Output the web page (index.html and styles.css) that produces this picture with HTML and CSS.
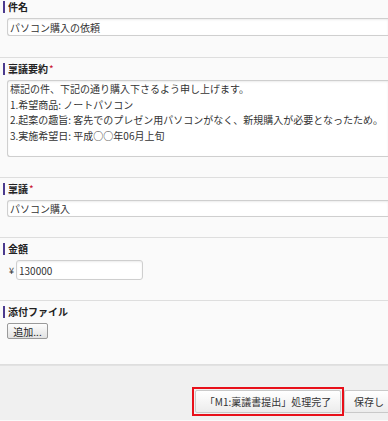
FILE: index.html
```html
<!DOCTYPE html>
<html lang="ja">
<head>
  <meta charset="UTF-8">
  <title>稟議書</title>
  <link rel="stylesheet" href="styles.css">
</head>
<body>
<div class="form">
  <div class="field first">
    <div class="label">件名</div>
    <input class="text wide" type="text" value="パソコン購入の依頼">
  </div>
  <div class="field">
    <div class="label">稟議要約<span class="req">*</span></div>
    <textarea class="memo">標記の件、下記の通り購入下さるよう申し上げます。
1.希望商品: ノートパソコン
2.起案の趣旨: 客先でのプレゼン用パソコンがなく、新規購入が必要となったため。
3.実施希望日: 平成○○年06月上旬</textarea>
  </div>
  <div class="field">
    <div class="label">稟議<span class="req">*</span></div>
    <input class="text wide short" type="text" value="パソコン購入">
  </div>
  <div class="field">
    <div class="label">金額</div>
    <div class="amount">
      <span class="yen">¥</span>
      <input class="text money" type="text" value="130000">
    </div>
  </div>
  <div class="field last">
    <div class="label">添付ファイル</div>
    <button class="add">追加...</button>
  </div>
</div>
<div class="footer">
  <div class="highlight">
    <button class="action">「M1:稟議書提出」処理完了</button>
  </div>
  <button class="action save">保存し</button>
</div>
</body>
</html>
```

FILE: styles.css
```css
html, body {
  margin: 0;
  padding: 0;
  overflow: hidden;
}

body {
  background: #fafafa;
  font-family: "Noto Sans CJK JP", "Noto Sans", sans-serif;
  font-size: 10px;
  color: #333;
}

.field {
  padding: 5px 0 20px 0;
  border-bottom: 1px solid #dedede;
}

.field.first {
  padding-top: 1px;
  padding-bottom: 21px;
}

.field.last {
  padding-bottom: 25px;
}

.label {
  margin-left: 3px;
  padding-left: 3px;
  border-left: 2px solid #4b3a8e;
  height: 12px;
  line-height: 12px;
  font-size: 10px;
  font-weight: bold;
  color: #222;
  margin-bottom: 5px;
}

.req {
  color: #c8102e;
  font-weight: normal;
  margin-left: 1px;
}

.text, .memo {
  display: block;
  box-sizing: border-box;
  margin: 0 0 0 7px;
  border: 1px solid #cfcfcf;
  border-radius: 3px;
  box-shadow: inset 0 1px 2px rgba(0, 0, 0, 0.08);
  background: #fff;
  font-family: inherit;
  font-size: 10px;
  color: #333;
  outline: none;
}

.wide {
  width: calc(100% - 7px);
  border-right: none;
  border-radius: 3px 0 0 3px;
  height: 18px;
  padding: 0 2px;
}

.short {
  height: 17px;
}

.memo {
  width: calc(100% - 7px);
  border-right: none;
  border-radius: 3px 0 0 3px;
  height: 77px;
  padding: 0 2px;
  line-height: 15.5px;
  resize: none;
  overflow: hidden;
}

.amount {
  display: flex;
  align-items: center;
  padding-left: 9px;
}

.yen {
  font-size: 9px;
  width: 7px;
}

.money {
  width: 127px;
  height: 20px;
  padding: 0 2px;
  margin-left: 0;
}

.add {
  display: block;
  margin-left: 7px;
  width: 41px;
  height: 16px;
  padding: 0;
  border: 1px solid #9a9a9a;
  border-radius: 2px;
  background: linear-gradient(to bottom, #fdfdfd, #e2e2e2);
  font-family: inherit;
  font-size: 10px;
  color: #222;
  line-height: 13px;
}

.footer {
  border-top: 1px solid #e2e2e2;
  background: #f0f0f0;
  height: 55px;
  display: flex;
  align-items: flex-start;
  padding: 21px 0 0 192px;
  box-sizing: border-box;
  overflow: hidden;
}

.highlight {
  flex: none;
  border: 2px solid #e8101a;
  padding: 1px;
}

.action {
  display: block;
  height: 23px;
  border: 1px solid #c9c9c9;
  border-radius: 2px;
  background: linear-gradient(to bottom, #ffffff, #ececec);
  font-family: inherit;
  font-size: 10px;
  color: #333;
}

.highlight .action {
  width: 146px;
  padding: 0;
}

.save {
  flex: none;
  margin-top: 3px;
  padding: 0 9px;
  border-right: none;
  border-radius: 2px 0 0 2px;
}
```
